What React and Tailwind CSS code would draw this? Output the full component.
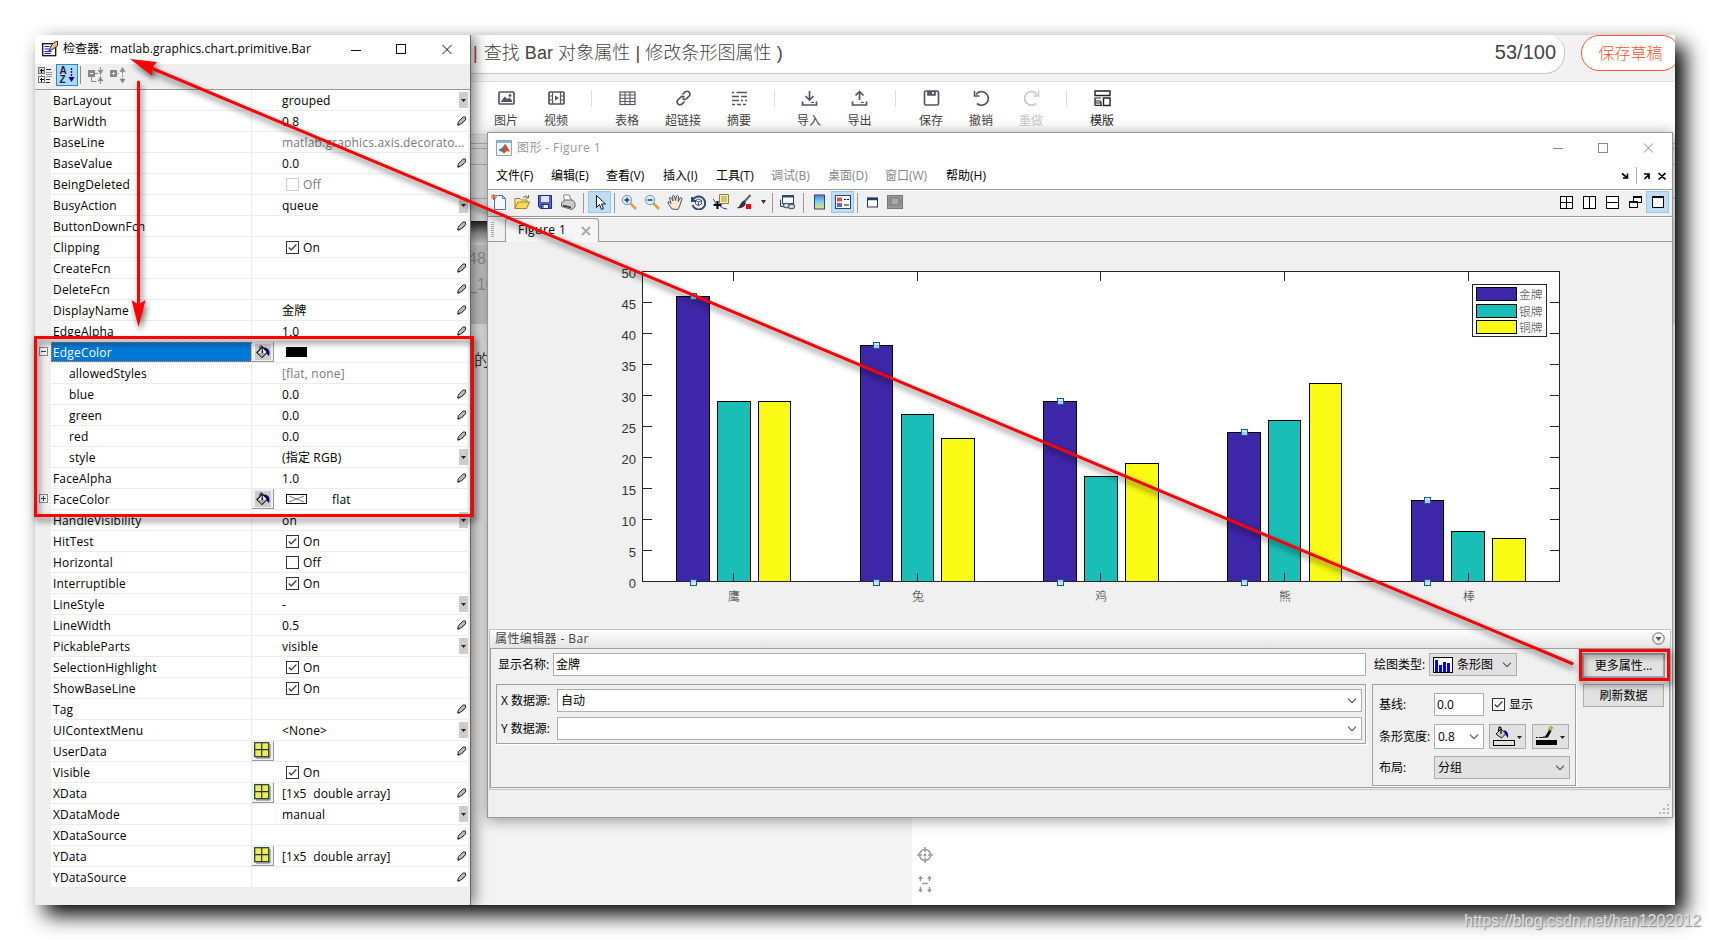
import React from "react";

const properties = [
  { name: "BarLayout", value: "grouped", edit: "drop" },
  { name: "BarWidth", value: "0.8", edit: "pen" },
  { name: "BaseLine", value: "matlab.graphics.axis.decorato...", muted: true },
  { name: "BaseValue", value: "0.0", edit: "pen" },
  { name: "BeingDeleted", check: false, value: "Off", muted: true },
  { name: "BusyAction", value: "queue", edit: "drop" },
  { name: "ButtonDownFcn", edit: "pen" },
  { name: "Clipping", check: true, value: "On" },
  { name: "CreateFcn", edit: "pen" },
  { name: "DeleteFcn", edit: "pen" },
  { name: "DisplayName", value: "金牌", edit: "pen" },
  { name: "EdgeAlpha", value: "1.0", edit: "pen" },
  { name: "EdgeColor", icon: "bucket", swatch: "black", toggle: "-", selected: true },
  { name: "allowedStyles", value: "[flat, none]", muted: true, child: true },
  { name: "blue", value: "0.0", edit: "pen", child: true },
  { name: "green", value: "0.0", edit: "pen", child: true },
  { name: "red", value: "0.0", edit: "pen", child: true },
  { name: "style", value: "(指定 RGB)", edit: "drop", child: true },
  { name: "FaceAlpha", value: "1.0", edit: "pen" },
  { name: "FaceColor", icon: "bucket", swatch: "none", value: "flat", toggle: "+" },
  { name: "HandleVisibility", value: "on", edit: "drop" },
  { name: "HitTest", check: true, value: "On" },
  { name: "Horizontal", check: false, value: "Off" },
  { name: "Interruptible", check: true, value: "On" },
  { name: "LineStyle", value: "-", edit: "drop" },
  { name: "LineWidth", value: "0.5", edit: "pen" },
  { name: "PickableParts", value: "visible", edit: "drop" },
  { name: "SelectionHighlight", check: true, value: "On" },
  { name: "ShowBaseLine", check: true, value: "On" },
  { name: "Tag", edit: "pen" },
  { name: "UIContextMenu", value: "<None>", edit: "drop" },
  { name: "UserData", icon: "grid", edit: "pen" },
  { name: "Visible", check: true, value: "On" },
  { name: "XData", icon: "grid", value: "[1x5  double array]", edit: "pen" },
  { name: "XDataMode", value: "manual", edit: "drop" },
  { name: "XDataSource", edit: "pen" },
  { name: "YData", icon: "grid", value: "[1x5  double array]", edit: "pen" },
  { name: "YDataSource", edit: "pen" },
];

const series = [
  { name: "金牌", color: "#3e26a8", values: [46, 38, 29, 24, 13] },
  { name: "银牌", color: "#19bfb6", values: [29, 27, 17, 26, 8] },
  { name: "铜牌", color: "#f9fb15", values: [29, 23, 19, 32, 7] },
];

const barEdges = [
  [[189, 222], [373, 405], [556, 589], [740, 773], [924, 956]],
  [[230, 263], [414, 446], [597, 630], [781, 813], [964, 997]],
  [[271, 303], [454, 487], [638, 671], [822, 854], [1005, 1038]],
];

const categories = [
  { label: "鹰", x: 246 },
  { label: "兔", x: 430 },
  { label: "鸡", x: 613 },
  { label: "熊", x: 797 },
  { label: "棒", x: 981 },
];

const Check = ({ checked, muted }) => (
  <svg width="13" height="13" className="shrink-0" fill="none">
    <rect x="0.5" y="0.5" width="12" height="12" fill="#fff" stroke={muted ? "#ccc" : "#333"} />
    {checked && <path d="M2.8 6.5 5.2 9 10.4 3.5" stroke="#333" strokeWidth="1.2" />}
  </svg>
);

const Chevron = () => (
  <svg width="10" height="6" className="shrink-0" fill="none">
    <path d="M1 0.7 5 4.7 9 0.7" stroke="#555" strokeWidth="1.1" />
  </svg>
);

const Bucket = () => (
  <svg width="16" height="14" viewBox="0 0 16 14" className="shrink-0">
    <path d="M2 7.5 7.5 2l5 5-5.5 5.5z" fill="#eee" stroke="#111" strokeWidth="1.2" />
    <path d="M3 8h8l-4.3 4z" fill="#aaa" />
    <path d="M7.3 7V2.5Q7.3.7 5.8.8 4.8 1 5 4" fill="none" stroke="#111" />
    <path d="M9 2.5q4 .2 5.3 3.5.7 2.8-.6 5-2-1.4-2-4Q11 4.8 9 4z" fill="#000080" />
    <circle cx="7.3" cy="7" r="1" fill="#111" />
  </svg>
);

const GridIcon = () => (
  <svg width="17" height="17">
    <path d="M2 16h14V2" fill="none" stroke="#777" />
    <rect x="0.7" y="0.7" width="14" height="14" fill="#f7e94f" stroke="#123e3e" strokeWidth="1.2" />
    <path d="M7.7 1v14M1 7.7h14" stroke="#123e3e" strokeWidth="1.2" />
  </svg>
);

const Pen = () => (
  <svg width="10" height="10" fill="none">
    <path d="M1 9 1.300 5.800 6 1h2.500v2.500L4 8z" fill="#bbb" stroke="#333" strokeWidth="1" />
    <path d="M4.500 8 9 3.300" stroke="#444" />
    <path d="M.5 9.500V7.500L2.800 9.200z" fill="#222" />
  </svg>
);

const PropertyRow = ({ prop }) => (
  <div className="flex h-[21px] tracking-[0.17px]">
    <div className="flex w-4 justify-center pt-[5px]">
      {prop.toggle && (
        <svg width="9" height="9">
          <rect x="0.5" y="0.5" width="8" height="8" fill="#f4f4f4" stroke="#888" />
          <path d={prop.toggle === "+" ? "M2 4.500h5M4.500 2v5" : "M2 4.500h5"} stroke="#1c3c8c" />
        </svg>
      )}
    </div>
    <div className="flex w-[417px] border-b border-[#ececec] bg-white">
      <div
        className={`flex w-[201px] items-center border-r border-[#ececec] pt-0.5 ${prop.child ? "pl-[18px]" : "pl-0.5"} ${
          prop.selected ? "bg-[#0078d7] text-white outline-1 -outline-offset-1 outline-dotted outline-[#ff8728]" : ""
        }`}
      >
        {prop.name}
      </div>
      <div className="w-[22px]">
        {prop.icon && (
          <div className="flex h-5 w-[22px] items-center justify-center border-r border-b border-[#999] bg-[#f0f0f0]">
            {prop.icon === "grid" ? (
              <GridIcon />
            ) : (
              <span className="flex h-4 w-4 items-center justify-center bg-[#ccc]">
                <Bucket />
              </span>
            )}
          </div>
        )}
      </div>
      <div className={`flex flex-1 items-center pl-2 whitespace-pre ${prop.muted ? "text-[#7a7a7a]" : ""}`}>
        {prop.check !== undefined && (
          <span className="mr-1 ml-1">
            <Check checked={prop.check} muted={prop.muted} />
          </span>
        )}
        {prop.swatch === "black" && <span className="ml-1 h-2.5 w-[21px] bg-black" />}
        {prop.swatch === "none" && (
          <svg width="21" height="10" className="mr-[25px] ml-1">
            <rect x="0.5" y="0.5" width="20" height="9" fill="#fff" stroke="#111" />
            <path d="M3 2 18 8M3 8 18 2" stroke="#777" />
          </svg>
        )}
        <span className="pt-0.5">{prop.value}</span>
      </div>
      {prop.edit === "drop" && (
        <div className="mt-0.5 flex h-4 w-[9px] items-center justify-center bg-[#cfcdca]">
          <svg width="5" height="3">
            <path d="M0 0h5L2.500 3z" fill="#222" />
          </svg>
        </div>
      )}
      {prop.edit === "pen" && (
        <div className="mt-[5px] mr-px">
          <Pen />
        </div>
      )}
    </div>
  </div>
);

const Inspector = () => (
  <div className="absolute top-0 left-0 flex h-[870px] w-[436px] flex-col border-r border-[#666] bg-[#efefef] text-black shadow-[3px_0_14px_rgba(0,0,0,0.55)]">
    <div className="flex h-[29px] items-center bg-white pb-0.5 pl-[7px]">
      <svg width="16" height="16" viewBox="0 0 16 16">
        <rect x="0.7" y="2.7" width="13" height="12" fill="#fff" stroke="#111" strokeWidth="1.3" />
        <path d="M2.500 5.500h5M2.500 8h5M2.500 10.500h7M2.500 12.500h6" stroke="#1818d0" />
        <path d="M7 10 9 5 12 1.500 15.500 0v5L11 8z" fill="#e7c08f" stroke="#222" strokeWidth="0.9" />
      </svg>
      <span className="ml-[5px] w-[47px]">检查器:</span>
      <span className="w-[240px] tracking-[0.12px]">matlab.graphics.chart.primitive.Bar</span>
      <svg width="102" height="12" fill="none" stroke="#111">
        <path d="M1 7.500h10M92.500 2l9 9M101.500 2l-9 9" />
        <rect x="46.500" y="1.500" width="9" height="9" />
      </svg>
    </div>
    <div className="flex h-[26px] border-b border-[#999] pl-[3px]">
      <svg width="15" height="17" className="mt-[3px]" fill="none" shapeRendering="crispEdges">
        <path d="M3.500 6v8" stroke="#777" strokeDasharray="1 1" />
        <rect x="0.5" y="0.5" width="6" height="6" fill="#ccc" stroke="#777" />
        <rect x="0.5" y="9.5" width="6" height="6" fill="#fff" stroke="#777" />
        <path d="M2 3.500h4M3.500 2v4M2 12.500h4M3.500 11v4" stroke="#000" />
        <path d="M8 2.500h5M8 12.500h4M8 15.500h4" stroke="#222" />
        <path d="M8 5.500h6M8 7.500h6M8 9.500h6" stroke="#999" />
      </svg>
      <div className="ml-[3px] flex h-[22px] w-[22px] items-center justify-center border border-[#2a86d8] bg-[#abd8fb]">
        <span className="w-2 font-['Liberation_Sans',sans-serif] text-[10px] leading-[9px] font-bold tracking-normal text-[#223]">
          A<br />Z
        </span>
        <svg width="7" height="16">
          <path d="M3.500 1v10" stroke="#000080" strokeWidth="1.300" strokeDasharray="2 1" />
          <path d="M0.500 10h6L3.500 15z" fill="#000080" />
        </svg>
      </div>
      <span className="mt-0.5 ml-0.5 h-[18px] w-px bg-[#8c8c8c]" />
      <svg width="40" height="17" className="mt-[3px] ml-[7px]" fill="none" stroke="#888">
        <rect x="0.5" y="3.5" width="6" height="6" fill="#888" />
        <path d="M2 6.500h3" stroke="#eee" />
        <path d="M3.500 10v4.500h5M7 6.500h3" />
        <path d="M12.500 0v17" strokeDasharray="2 1" />
        <path d="M10 3h5l-2.500 4zM10 14h5l-2.500-4z" fill="#888" strokeWidth="0.6" />
        <rect x="22.5" y="3.5" width="6" height="6" fill="#888" />
        <path d="M24 6.500h3M25.500 5v3" stroke="#eee" />
        <path d="M34.500 2v14" strokeDasharray="2 1" />
        <path d="M32 4.500h5l-2.500-4zM32 12h5l-2.500 4zM29 6.500h2" fill="#888" strokeWidth="0.6" />
      </svg>
    </div>
    {properties.map((prop) => (
      <PropertyRow key={prop.name} prop={prop} />
    ))}
  </div>
);

const editorTools = [
  { label: "图片", width: "w-[50px]", icon: <><rect x="1" y="2" width="15" height="12" rx="1" /><path d="M3 11.500 6.500 6.500l3 2.500 2-1.500L14 10.500v1.500H3z" fill="currentColor" stroke="none" /><circle cx="12" cy="5.500" r="1.400" fill="currentColor" stroke="none" /></> },
  { label: "视频", width: "w-[50px]", icon: <><rect x="1" y="2" width="15" height="12" rx="1" /><path d="M4.500 2v12M12.500 2v12M1 6h3.500M1 10h3.500M12.500 6H16M12.500 10H16" strokeWidth="1.200" /><path d="m7 5.500 4 2.500-4 2.500z" fill="currentColor" stroke="none" /></> },
  { sep: true, width: "w-5" },
  { label: "表格", width: "w-[52px]", icon: <><rect x="1" y="2" width="15" height="12.500" strokeWidth="1.200" /><path d="M1 5h15M1 8.300h15M1 11.500h15M6 2v12.500M11 2v12.500" strokeWidth="1.100" /></> },
  { label: "超链接", width: "w-[60px]", icon: <path d="m7.500 4.500 2.500-2.500q2-1.500 4 0 1.800 2 .2 4L11.500 8.700q-2 1.600-4 0M9.500 11.500 7 14q-2 1.500-4 0-1.800-2-.2-4L5.500 7.300q2-1.600 4 0" /> },
  { label: "摘要", width: "w-[52px]", icon: <path d="M1 2.500h2M5.500 2.500H16M1 6.500h7M10 6.500h6M1 10.500h7M10 10.500h2M14 10.500h2M1 14.500h3M6 14.500h4M12 14.500h3" strokeWidth="1.400" /> },
  { sep: true, width: "w-[19px]" },
  { label: "导入", width: "w-[50px]", icon: <><path d="M8.500 1v8M4.500 6l4 4 4-4M1.500 11.500V15h14v-3.500" /><path d="M10 12.500h3" strokeWidth="1" /></> },
  { label: "导出", width: "w-[51px]", icon: <><path d="M8.500 10V2M4.500 5.500l4-4 4 4M1.500 11.500V15h14v-3.500" /><path d="M10 12.500h3" strokeWidth="1" /></> },
  { sep: true, width: "w-[21px]" },
  { label: "保存", width: "w-[50px]", icon: <><rect x="1.500" y="1" width="14" height="14" rx="1.500" /><path d="M5 1v4h7V1" fill="currentColor" /><path d="M10 2v2" stroke="#fff" /></> },
  { label: "撤销", width: "w-[50px]", icon: <><path d="M3 4.500A6.800 6.800 0 1 1 4 13.500" /><path d="M1.500 1v5h5" strokeWidth="1.500" /></> },
  { label: "重做", width: "w-[50px]", color: "text-[#c8c8ca]", icon: <><path d="M14 4.500A6.800 6.800 0 1 0 13 13.500" /><path d="M15.500 1v5h-5" strokeWidth="1.500" /></> },
  { sep: true, width: "w-[21px]" },
  { label: "模版", width: "w-[50px]", color: "text-[#222]", icon: <><path d="M1 1h15v4.500H1zM9.500 8H16v7.500H9.500z" strokeWidth="1.400" /><path d="M1 8h6M1 11h6M1 15.300h7M1 7.500v8M7 11.500v4M1 13h6" strokeWidth="1.200" /></> },
];

const EditorPage = () => (
  <div className="flex h-full flex-col bg-[#e4e4e4]">
    <div className="h-[47px] border-b border-[#e0e0e0] bg-[#f3f3f3]">
      <div className="flex h-[39px]">
        <div className="flex w-[1530px] shrink-0 items-center rounded-br-[20px] rounded-tr-[16px] border-r border-b border-[#c8c8c8] bg-white pr-2 pb-0.5 pl-[438px] font-['Liberation_Sans','Noto_Sans_CJK_SC',sans-serif] text-lg text-[#444]">
          <span className="mr-1.5 font-light text-[#a33]">|</span>
          <span className="font-light tracking-[0.06px]">查找 Bar 对象属性 | 修改条形图属性 )</span>
          <span className="ml-auto text-[20px]">53/100</span>
        </div>
        <div className="ml-4 flex h-9 w-[99px] shrink-0 items-center justify-center rounded-full border border-[#fc5531] bg-white pb-0.5 font-['Noto_Sans_CJK_SC',sans-serif] text-base font-light text-[#fc5531]">
          保存草稿
        </div>
      </div>
    </div>
    <div className="flex h-[53px] border-b border-[#ddd] bg-white pl-[446px] text-xs">
      {editorTools.map((tool, i) =>
        tool.sep ? (
          <div key={i} className={`flex justify-center pt-2 ${tool.width}`}>
            <span className="h-[17px] w-px bg-[#ddd]" />
          </div>
        ) : (
          <div key={i} className={`flex flex-col items-center pt-2 ${tool.width} ${tool.color || "text-[#555566]"}`}>
            <svg width="17" height="17" viewBox="0 0 17 17" fill="none" stroke="currentColor" strokeWidth="1.700">
              {tool.icon}
            </svg>
            <span className={`mt-1.5 leading-4 ${tool.color || "text-[#444]"}`}>{tool.label}</span>
          </div>
        )
      )}
    </div>
    <div className="h-[86px] bg-[#f0f0f0] pt-2">
      <div className="h-1.5 border-t border-b border-[#bbb]" />
      <div className="h-4 border-b border-[#bbb]" />
      <div className="h-[34px] border-b border-[#bbb]" />
    </div>
    <div className="h-6 w-[900px] bg-linear-to-b from-[#222] via-[#999] to-[#e8e8e8]" />
    <div className="h-[79px] w-[900px] bg-[#d2d2d2] pt-px pl-[433px] font-['Liberation_Sans',sans-serif] text-base leading-[26px] text-[#999]">
      48.
      <br />
      <span>_10</span>
    </div>
    <div className="flex h-[493px] grow">
      <div className="w-[877px] bg-[#f4f4f4] pt-6 pl-[439px] text-base text-[#444]">的</div>
      <div className="flex flex-1 flex-col bg-white pt-[523px] pl-[5px]">
        <svg width="16" height="50" viewBox="0 0 16 50" fill="none" stroke="#999" strokeWidth="1.500">
          <circle cx="8" cy="8" r="5.500" />
          <circle cx="8" cy="8" r="1.500" fill="#999" stroke="none" />
          <path d="M8 0v5M8 11v5M0 8h5M11 8h5" />
          <path d="M5 36.500h6M3.500 29v5M12.500 29v5M3.500 40v5M12.500 40v5" />
          <path d="M1 32l2.500-3L6 32zM10 32l2.500-3 2.500 3zM1 42.500l2.500 3 2.500-3zM10 42.500l2.500 3 2.500-3z" fill="#999" stroke="none" />
        </svg>
      </div>
    </div>
  </div>
);

const menus = [
  { label: "文件(F)", width: "w-[55px]" },
  { label: "编辑(E)", width: "w-[55px]" },
  { label: "查看(V)", width: "w-[57px]" },
  { label: "插入(I)", width: "w-[53px]" },
  { label: "工具(T)", width: "w-[55px]" },
  { label: "调试(B)", width: "w-[57px]", muted: true },
  { label: "桌面(D)", width: "w-[57px]", muted: true },
  { label: "窗口(W)", width: "w-[61px]", muted: true },
  { label: "帮助(H)", width: "w-[55px]" },
];

const figureTools = [
  { icon: <><path d="M3.500 1.500h8l3 3v11h-11z" fill="#f4f9ff" stroke="#5878a8" /><path d="M11.500 1.500v3h3" stroke="#5878a8" /><path d="M2.500 0v6M0 3h6M.5 1l4.500 4M5 1 .5 5" stroke="#e06030" /></> },
  { icon: <><path d="M1 14.500v-10h5l1.500 1.500H13v3" fill="#ffe9a0" stroke="#a88020" /><path d="m1 14.500 3-6.500h11.500l-3 6.500z" fill="#ffd95c" stroke="#a88020" /><path d="M9 3.500q3-3 5 0M14.500 1v3h-3" stroke="#508050" /></> },
  { icon: <><path d="M1.500 1.500h13v13h-11l-2-2z" fill="#5560d8" stroke="#222a80" /><path d="M4 2h8v6H4z" fill="#dde6ff" /><path d="M4.500 10.500h7v4h-7z" fill="#eee" stroke="#222a80" /><path d="M6 11v3" stroke="#222" /></> },
  { icon: <><path d="m4.500 7-1-6h6l2 6" fill="#fff" stroke="#888" /><path d="m1.500 9 3-3h8l2.500 3v4l-3 2.500-10.500-3z" fill="#ccc" stroke="#666" /><path d="M3 11.500 11 13.500" stroke="#333" strokeWidth="1.500" /></> },
  { sep: true, width: "w-2 pl-[3px]" },
  { active: true, icon: <path d="m4.500 1.500v12l3-3 2 5 2-1-2-4.500h4z" fill="#fff" stroke="#111" /> },
  { sep: true, width: "w-[7px] pl-[3px]" },
  { icon: <><path d="m9 9 6 6" stroke="#e0a040" strokeWidth="2.500" /><circle cx="6" cy="6" r="4.700" fill="#d8f0fb" stroke="#7095b8" /><path d="M3.500 6h5M6 3.500v5" stroke="#123a80" strokeWidth="1.500" /></> },
  { icon: <><path d="m9 9 6 6" stroke="#e0a040" strokeWidth="2.500" /><circle cx="6" cy="6" r="4.700" fill="#d8f0fb" stroke="#7095b8" /><path d="M3.500 6h5" stroke="#123a80" strokeWidth="1.500" /></> },
  { icon: <path d="M5 15 1 9q-.5-2 1.500-1L4 9.500 2.500 4q.5-1.800 2 0L6 7 5.500 2q1-1.500 2 0L8.500 6.500 9.500 2q1-1.200 2 .5L11.200 7.500 13 4q1.500-1 2 .5L13 11l-2 4.500z" fill="#ffe8cc" stroke="#405080" /> },
  { icon: <><path d="M2 3v4h4M2.500 7a6.500 6.500 0 1 1 0 4" stroke="#33486c" strokeWidth="2" /><path d="m8.500 5 3 1.500v3.500l-3 1.500-3-1.500V6.500zM5.500 6.500l3 1.500 3-1.500M8.500 8v3.500" stroke="#33486c" strokeWidth="0.9" /></> },
  { icon: <><path d="M6.500.5h9v9h-9z" fill="#f4f0a8" stroke="#8a8440" /><path d="M8 3h6M8 5h6M8 7h6" stroke="#8a8440" strokeWidth="0.8" /><path d="M4.500 7v8M.5 11h8" stroke="#111" strokeWidth="2.200" /><path d="M0 5q2 2 3 5M7 12q3 3 7 3" stroke="#3030d0" /></> },
  { icon: <><path d="M14.500 1 8 8" stroke="#567" strokeWidth="2" /><path d="M9 6.500q-3 0-4.500 3.500T.5 14q5 1 8-2 2-2 .5-5.500z" fill="#334" /><path d="M10 10h5v5h-5z" fill="#f00" /></> },
  { drop: true },
  { sep: true, width: "w-[7px] pl-[3px]" },
  { icon: <><rect x="3.500" y="1.500" width="11" height="8" fill="#fff" stroke="#2c4870" /><path d="M3.500 2.500h11" stroke="#2c4870" strokeWidth="2" /><path d="M1.500 5.500v7h5" stroke="#2c4870" /><rect x="4.500" y="9.500" width="6" height="4" rx="2" fill="#eee" stroke="#567" strokeWidth="1.400" /><rect x="9.500" y="10.500" width="6" height="4" rx="2" fill="#eee" stroke="#567" strokeWidth="1.400" /></> },
  { sep: true, width: "w-[9px] pl-1" },
  { icon: <rect x="3.500" y="1" width="10" height="14" fill="url(#colorbar)" stroke="#2c4870" /> },
  { active: true, icon: <><rect x="0.5" y="1.5" width="15" height="13" fill="#fff" stroke="#2c4870" /><path d="M2 3.500h5v4H2z" fill="#e05050" /><path d="M2 9h5v4H2z" fill="#6060e0" /><path d="M9 5.500h2M12 5.500h2M9 11h5" stroke="#111" /></> },
  { sep: true, width: "w-[7px] pl-[3px]" },
  { icon: <><rect x="3.500" y="4" width="10" height="9" fill="#fff" stroke="#223a60" /><path d="M3 5h11" stroke="#223a60" strokeWidth="2.500" /></> },
  { icon: <><rect x="0.5" y="1.5" width="15" height="13" fill="#999" stroke="#777" /><rect x="4" y="4" width="8" height="7" fill="#aaa" stroke="#777" /><path d="M2 4v8M14 4v8" stroke="#888" /></> },
];

const layoutTools = [
  <path d="M2 2h12v12H2zM8 2v12M2 8h12" />,
  <path d="M2 2h12v12H2zM8 2v12" />,
  <path d="M2 2h12v12H2zM2 8h12" />,
  <><path d="M6 2h8v6H6z" /><path d="M6 3h8" strokeWidth="2" /><path d="M2.500 7h8v6h-8z" /><path d="M2.500 7.500h8" strokeWidth="2" /></>,
  <><path d="M2.500 2.500h11v11h-11z" /><path d="M2 3h12" strokeWidth="2.500" /></>,
];

// plot area runs x 155..1072, y 30..340, 6.2px per unit
const Chart = () => (
  <svg width="1184" height="387" fill="none" shapeRendering="crispEdges" className="block font-['Liberation_Sans','Noto_Sans_CJK_SC',sans-serif]">
    <rect x="154.500" y="29.500" width="917" height="310" fill="#fff" stroke="#262626" />
    {series.map((s, i) =>
      s.values.map((v, j) => {
        const [x1, x2] = barEdges[i][j];
        const h = Math.round(v * 6.2);
        return <rect key={`${i}-${j}`} x={x1 - 0.5} y={339.5 - h} width={x2 - x1} height={h} fill={s.color} stroke="#000" />;
      })
    )}
    {[0, 5, 10, 15, 20, 25, 30, 35, 40, 45, 50].map((v) => {
      const y = Math.round(339 - v * 6.2) + 0.5;
      return (
        <g key={v}>
          <path d={`M155 ${y}h9M1071 ${y}h-9`} stroke="#262626" />
          <text x="148" y={y + 6} textAnchor="end" fontSize="13" fill="#333">{v}</text>
        </g>
      );
    })}
    {categories.map((c) => (
      <g key={c.label}>
        <path d={`M${c.x - 0.5} 30v9M${c.x - 0.5} 340v-9`} stroke="#262626" />
        <text x={c.x} y="359" textAnchor="middle" fontSize="12" fontWeight="300" fill="#333">{c.label}</text>
      </g>
    ))}
    <path d="M154.500 339.500h917" stroke="#262626" />
    {series[0].values.map((v, j) => {
      const cx = Math.ceil((barEdges[0][j][0] + barEdges[0][j][1]) / 2) - 1;
      return (
        <g key={j} fill="#cfe2f7" fillOpacity="0.85" stroke="#0060a8">
          <rect x={cx - 2.5} y={336.5 - Math.round(v * 6.2)} width="6" height="6" />
          <rect x={cx - 2.5} y="337.500" width="6" height="6" />
        </g>
      );
    })}
    <rect x="984.500" y="42.500" width="74" height="52" fill="#fff" stroke="#262626" />
    {series.map((s, i) => (
      <g key={s.name}>
        <rect x="988.500" y={45.5 + i * 16.5} width="40" height="13" fill={s.color} stroke="#000" />
        <text x="1031" y={57 + i * 16.5} fontSize="11.700" fontWeight="300" fill="#333">{s.name}</text>
      </g>
    ))}
  </svg>
);

const Field = ({ className, children }) => (
  <div className={`flex items-center border border-[#adadad] bg-white px-0.5 ${className}`}>{children}</div>
);

const Combo = ({ className, children }) => (
  <div className={`flex items-center border border-[#adadad] pl-[3px] ${className}`}>
    {children}
    <span className="ml-auto pr-1">
      <Chevron />
    </span>
  </div>
);

const PropertyEditor = () => (
  <div className="mx-px h-[161px] border border-[#c4c4c4]">
    <div className="flex h-[18px] items-center justify-between bg-linear-to-b from-white to-[#e4e4e4] pr-[5px] pb-px pl-[5px] text-[#444]">
      <span className="tracking-[0.4px]">属性编辑器 - Bar</span>
      <svg width="13" height="13" fill="none">
        <circle cx="6.500" cy="6.500" r="5.700" stroke="#666" />
        <path d="M3.500 5h6l-3 4z" fill="#555" />
      </svg>
    </div>
    <div className="flex h-[140px] border border-[#a0a0a0] pt-1">
      <div className="w-[875px] pl-[5px]">
        <div className="flex h-[23px] items-center">
          <span className="w-[57px] pl-0.5">显示名称:</span>
          <Field className="h-[23px] w-[814px]">金牌</Field>
        </div>
        <div className="mt-2 w-[870px] border border-[#a0a0a0] pt-1 pl-1 shadow-[1px_1px_0_#fff]">
          {["X", "Y"].map((axis) => (
            <div key={axis} className="mb-[5px] flex h-[23px] items-center last:mb-[3px]">
              <span className="w-14">{axis} 数据源:</span>
              <Combo className="h-[23px] w-[805px] bg-white">{axis === "X" && "自动"}</Combo>
            </div>
          ))}
        </div>
      </div>
      <div className="w-[217px] pl-1.5">
        <div className="flex h-[23px] items-center">
          <span className="w-[57px] pl-0.5">绘图类型:</span>
          <Combo className="h-[23px] w-[88px] bg-[#e1e1e1]">
            <svg width="20" height="16" shapeRendering="crispEdges" className="mr-1">
              <rect x="0.5" y="0.5" width="19" height="15" fill="#fff" stroke="#000" />
              <path d="M2 3h3v12H2zM6 8h3v7H6zM10 5h3v10h-3zM14 6h3v9h-3z" fill="#00f" />
            </svg>
            条形图
          </Combo>
        </div>
        <div className="mt-2 h-[102px] w-[204px] border border-[#a0a0a0] pl-1.5 shadow-[1px_1px_0_#fff]">
          <div className="mt-2 flex h-[23px] items-center">
            <span className="w-[55px]">基线:</span>
            <Field className="mr-2 h-[23px] w-[50px]">0.0</Field>
            <Check checked />
            <span className="ml-1">显示</span>
          </div>
          <div className="mt-2 flex h-[25px] items-center">
            <span className="w-[55px]">条形宽度:</span>
            <Combo className="h-[25px] w-[50px] bg-white">0.8</Combo>
            <div className="ml-[5px] flex h-[25px] w-[37px] items-center border border-[#adadad] bg-[#e1e1e1] pl-[3px]">
              <svg width="31" height="21">
                <path d="M3 8 8 3l5 4.500-4.500 4.500z" fill="#ccc" stroke="#111" />
                <path d="M8 8V3Q8 .5 6 1.300L5.500 5" fill="none" stroke="#111" strokeWidth="1.300" />
                <path d="M11 4q5 1 4 8l-3-4z" fill="#000080" />
                <rect x="0.5" y="14.5" width="21" height="5" fill="none" stroke="#000" />
                <path d="M24 10h5l-2.500 3z" fill="#222" />
              </svg>
            </div>
            <div className="ml-1.5 flex h-[25px] w-[37px] items-center border border-[#adadad] bg-[#e1e1e1] pl-[3px]">
              <svg width="31" height="21">
                <path d="M0 11.500h2M3 11.500h3" stroke="#111" />
                <path d="M5.500 12 7 10.500h2L13 4l2.500 1L12 11.500z" fill="#111" />
                <path d="m12.500 3.500 2-3 2 1-1.500 3z" fill="#dd0" stroke="#333" strokeWidth="0.5" />
                <rect y="14" width="21" height="5" fill="#000" />
                <path d="M24 10h5l-2.500 3z" fill="#222" />
              </svg>
            </div>
          </div>
          <div className="mt-[7px] flex h-[23px] items-center">
            <span className="w-[55px]">布局:</span>
            <Combo className="h-[23px] w-[136px] bg-[#e1e1e1]">分组</Combo>
          </div>
        </div>
      </div>
      <div className="flex flex-col gap-[7px]">
        <div className="mt-px flex h-[23px] w-[81px] items-center justify-center border border-[#adadad] bg-[#e1e1e1] outline-1 outline-[#999]">更多属性...</div>
        <div className="flex h-[23px] w-[81px] items-center justify-center border border-[#adadad] bg-[#e1e1e1]">刷新数据</div>
      </div>
    </div>
  </div>
);

const FigureWindow = () => (
  <div className="absolute top-[97px] left-[452px] flex h-[686px] w-[1186px] flex-col border border-[#999] bg-[#f0f0f0] text-black shadow-[0_2px_14px_rgba(0,0,0,0.4)]">
    <div className="flex h-[30px] items-center bg-white pl-2 text-[#999]">
      <svg width="16" height="16">
        <rect x="0.5" y="0.5" width="15" height="15" fill="#f6f9fc" stroke="#90a4b4" />
        <path d="M1 2h14" stroke="#88b8d8" strokeWidth="2" />
        <path d="m2 10 4-2 3-4 1.500 3-4 5z" fill="#3a78b8" />
        <path d="M9 4q1 0 5 8l-3-1-3 2.500-2-2q2-1 3-7.500z" fill="#d8501c" />
      </svg>
      <span className="ml-[5px] tracking-[0.4px]">图形 - Figure 1</span>
      <svg width="102" height="12" fill="none" stroke="#888" className="mr-[18px] ml-auto">
        <path d="M1 6.500h10M92 1.500l9 9M101 1.500l-9 9" />
        <rect x="46.500" y="1.500" width="9" height="9" />
      </svg>
    </div>
    <div className="flex h-[27px] items-center border-b border-[#999] bg-white pl-2">
      {menus.map((m) => (
        <span key={m.label} className={`${m.width} ${m.muted ? "text-[#888]" : ""}`}>{m.label}</span>
      ))}
      <svg width="46" height="18" className="mr-1.5 ml-auto" fill="none" stroke="#000" strokeWidth="1.600">
        <path d="M2 6.500 6.500 10M7.500 6.500v4.500H3" />
        <path d="M16.500 0v17" stroke="#aaa" strokeWidth="1" />
        <path d="M24.500 12l4-4M24 7h5v5M38.500 6l7 6.500M45.500 6l-7 6.500" />
      </svg>
    </div>
    <div className="flex h-[27px] border-t border-b border-t-white border-b-[#999]">
      <svg width="0" height="0">
        <linearGradient id="colorbar" x2="0" y2="1">
          <stop stopColor="#6078d8" />
          <stop offset="0.5" stopColor="#78d8e8" />
          <stop offset="1" stopColor="#f8d868" />
        </linearGradient>
      </svg>
      {figureTools.map((t, i) => {
        if (t.sep) return <div key={i} className={`pt-0.5 ${t.width}`}><div className="h-5 w-px bg-[#999]" /></div>;
        if (t.drop) return (
          <svg key={i} width="13" height="22"><path d="M5 9h5l-2.500 4z" fill="#333" /></svg>
        );
        return (
          <div key={i} className={`flex h-[22px] w-[23px] items-center justify-center ${t.active ? "border border-[#90c8f6] bg-[#c0dcf3]" : "pr-px"}`}>
            <svg width="16" height="16" fill="none">{t.icon}</svg>
          </div>
        );
      })}
      <div className="mr-[3px] ml-auto flex">
        {layoutTools.map((icon, i) => (
          <div key={i} className={`flex h-[22px] w-[23px] items-center justify-center ${i === 4 ? "border border-[#90c8f6] bg-[#c0dcf3]" : ""}`}>
            <svg width="16" height="16" fill="#fff" stroke="#000" shapeRendering="crispEdges">{icon}</svg>
          </div>
        ))}
      </div>
    </div>
    <div className="flex h-[25px] border-t border-white">
      <div className="w-[17px] border-b border-[#999] pt-1 pl-[3px]">
        <div className="h-4 w-[3px] bg-[repeating-linear-gradient(#aaa_0_1px,#f0f0f0_1px_2px)]" />
      </div>
      <div className="flex w-[94px] items-center rounded-t border border-b-0 border-[#999] bg-[#f6f6f6] pb-0.5 pl-3">
        <span className="tracking-[0.45px]">Figure 1</span>
        <svg width="10" height="10" className="mt-0.5 ml-[15px]">
          <path d="m1 1 8 8M9 1 1 9" stroke="#aaa" strokeWidth="2" />
        </svg>
      </div>
      <div className="flex-1 border-b border-[#999]" />
    </div>
    <Chart />
    <PropertyEditor />
    <div className="flex flex-1 items-end justify-end p-[3px]">
      <svg width="10" height="10" fill="#bbb6ae">
        <path d="M8 0h2v2H8zM4 4h2v2H4zM8 4h2v2H8zM0 8h2v2H0zM4 8h2v2H4zM8 8h2v2H8z" />
      </svg>
    </div>
  </div>
);

const Annotations = () => (
  <svg width="1710" height="940" className="pointer-events-none absolute top-0 left-0 drop-shadow-[2px_4px_3px_rgba(0,0,0,0.6)]" fill="none" stroke="#f00" strokeWidth="3">
    <rect x="35.500" y="337.500" width="437" height="178" />
    <rect x="1580.500" y="650.500" width="88" height="29" />
    <path d="M1572 663.500 150 67.500M138.500 82v226" strokeLinecap="round" />
    <path d="M130 59l27 3-5 6 .5 8zM138.500 327l-7-27 7 4.500 7-4.500z" fill="#f00" stroke="none" />
  </svg>
);

const App = () => (
  <div className="relative h-[940px] w-[1710px] overflow-hidden bg-white pt-[35px] pl-[35px] font-['Open_Sans','Noto_Sans_CJK_SC',sans-serif] text-xs">
    <div className="relative h-[870px] w-[1640px] overflow-hidden shadow-[10px_10px_20px_#000]">
      <EditorPage />
      <FigureWindow />
      <Inspector />
    </div>
    <Annotations />
    <div className="absolute right-[9px] bottom-[7px] font-['Liberation_Sans',sans-serif] text-base text-[#ddd] [text-shadow:1px_1px_1px_#888]">
      https://blog.csdn.net/han1202012
    </div>
  </div>
);

export default App;
